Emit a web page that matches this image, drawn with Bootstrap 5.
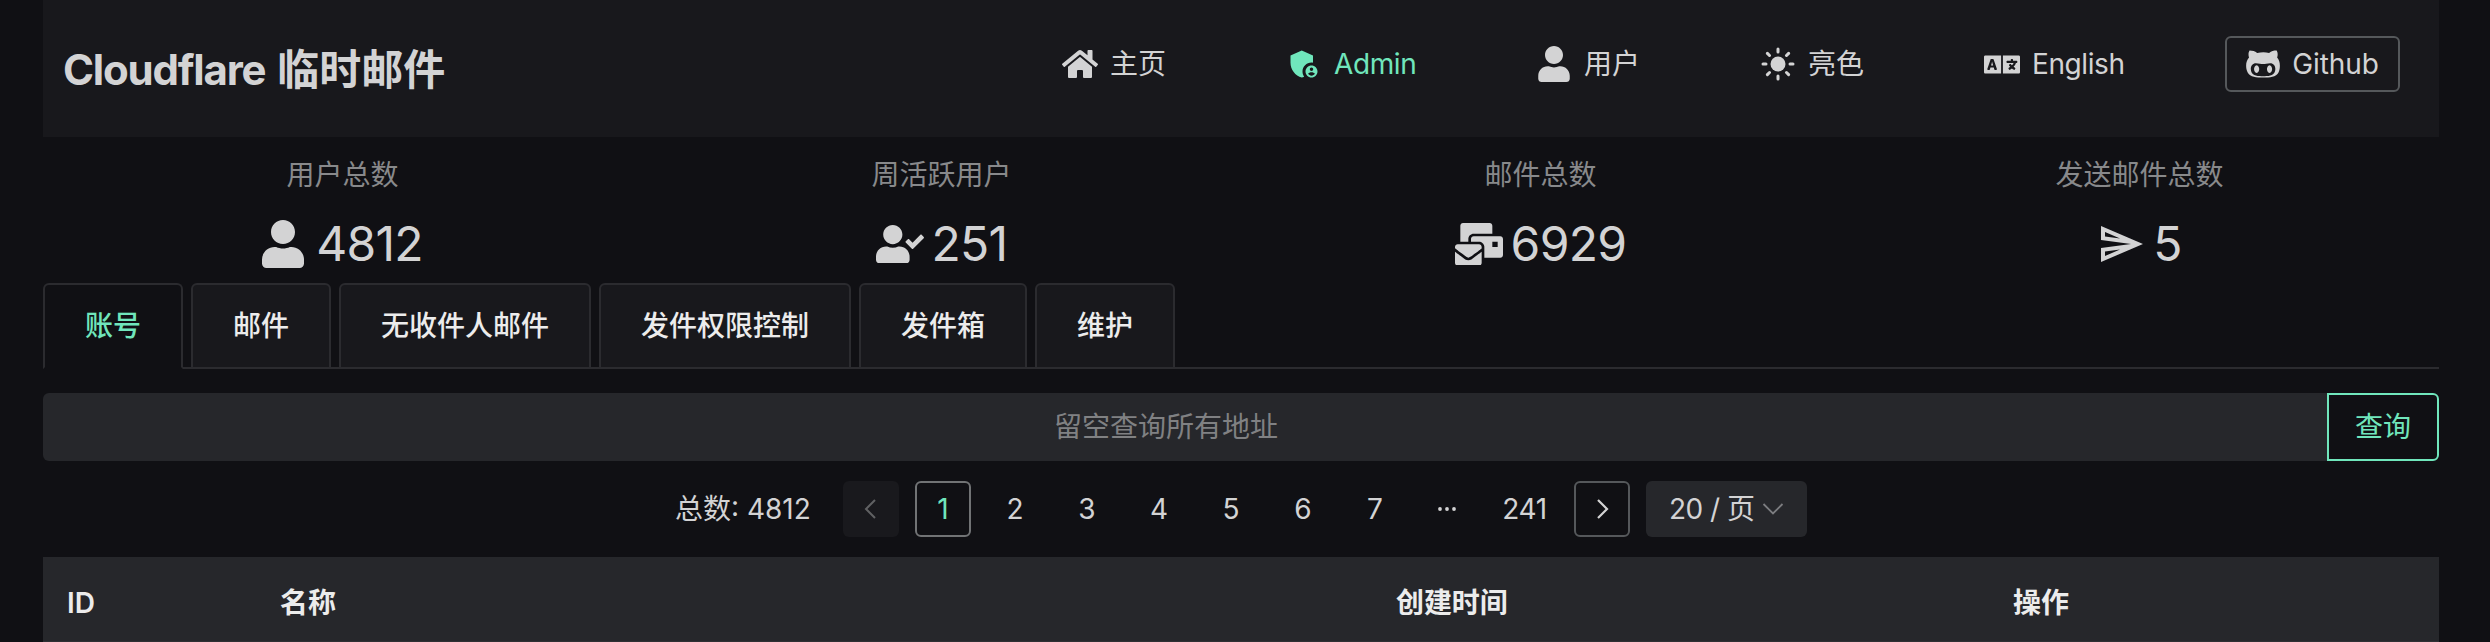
<!DOCTYPE html>
<html lang="zh-CN" data-bs-theme="dark">
<head>
<meta charset="utf-8">
<title>Cloudflare 临时邮件</title>
<link href="https://cdn.jsdelivr.net/npm/bootstrap@5.3.0/dist/css/bootstrap.min.css" rel="stylesheet">
<style>
  :root { --accent: #70e6bc; --fg: #d3d3d4; --line: #2b2b2f; --field: #26272b; }
  body { background: #101014; color: var(--fg); font-family: Inter, "Noto Sans CJK SC", sans-serif; font-size: 28px; line-height: 44px; height: 642px; overflow: hidden; }
  svg { display: block; flex: none; fill: currentColor; }
  .page { padding: 0 51px 0 43px; height: 642px; overflow: hidden; }
  .topbar { height: 137px; background: #18181c; padding: 0 39px 0 20px; }
  .brand { font-size: 42px; font-weight: 700; letter-spacing: -1.2px; line-height: 60px; padding-top: 40px; white-space: pre; }
  .brand span { letter-spacing: 0; margin-left: 3px; }
  .menu { display: grid; grid-template-columns: 224px 250px 224px 224px 241px 175px; padding-top: 36px; height: 92px; }
  .menu .entry { display: flex; align-items: center; gap: 12px; color: inherit; text-decoration: none; white-space: nowrap; }
  .menu .entry > .glyph { width: 36px; display: flex; justify-content: center; }
  .menu .current { color: var(--accent); }
  .menu .btn { --bs-btn-border-color: #55585b; --bs-btn-color: var(--fg); --bs-btn-border-radius: 6px; border-width: 2px; font-size: 28px; line-height: 44px; width: 175px; padding: 0; height: 56px; gap: 12px; }
  .lat { letter-spacing: -.4px; }
  .btn .lat { letter-spacing: -.1px; }
  .stats { height: 146px; padding-top: 16px; }
  .stats .title { color: #88898b; line-height: 44px; }
  .stats .figure { height: 60px; margin: 17px 0 0; font-size: 48px; letter-spacing: -.7px; line-height: 60px; }
  .tabs { --bs-nav-tabs-border-width: 2px; --bs-nav-tabs-border-color: var(--line); --bs-nav-tabs-border-radius: 6px; gap: 8px; height: 86px; flex-wrap: nowrap; }
  .tabs .nav-link { height: 86px; padding: 0 40px; font-weight: 500; color: #ececec; background: #18181c; border-color: var(--line); line-height: 82px; }
  .tabs .nav-link.active { color: var(--accent); background: #101014; border-color: var(--line) var(--line) #101014; }
  .search { height: 68px; margin-top: 24px; }
  .search .form-control { background: var(--field); border: 0; border-radius: 6px 0 0 6px; font-size: 28px; text-align: center; padding: 0 38px 0 0; }
  .search .form-control::placeholder { color: #808183; opacity: 1; }
  .search .btn { width: 112px; border: 2px solid var(--accent); border-radius: 0 6px 6px 0; color: var(--accent); font-size: 28px; margin: 0 !important; padding: 0; }
  .pager { height: 56px; margin: 20px 0; padding-left: 632px; }
  .pager .total { width: 152px; margin-right: 16px; letter-spacing: 0; white-space: nowrap; }
  .pager .cell { width: 56px; height: 56px; border: 2px solid transparent; border-radius: 6px; display: flex; align-items: center; justify-content: center; margin-right: 16px; }
  .pager .cell.wide { width: 67px; margin-right: 16px; letter-spacing: -.3px; }
  .pager .prev { background: #19191d; color: #606163; }
  .pager .on { border-color: #717375; color: var(--accent); }
  .pager .next { border-color: #55585b; }
  .pager .size { width: 161px; height: 56px; background: var(--field); border-radius: 6px; padding-left: 23px; letter-spacing: -.5px; }
  .pager .size svg { margin-left: 7px; }
  .line { fill: none; stroke: currentColor; }
  .listing { table-layout: fixed; margin: 0; --bs-table-bg: #26272b; --bs-table-color: #ececec; }
  .listing th { height: 85px; padding: 7px 24px 0; border-bottom: 2px solid #2f3034; font-weight: 600; vertical-align: middle; line-height: 44px; letter-spacing: -.1px; }
</style>
</head>
<body>
<svg width="0" height="0" class="position-absolute">
  <symbol id="person" viewBox="0 0 448 512"><path d="M224 256c70.7 0 128-57.3 128-128S294.7 0 224 0 96 57.3 96 128s57.3 128 128 128zm89.6 32h-16.7c-22.2 10.2-46.9 16-72.9 16s-50.6-5.8-72.9-16h-16.7C60.2 288 0 348.2 0 422.4V464c0 26.5 21.5 48 48 48h352c26.5 0 48-21.5 48-48v-41.6c0-74.2-60.2-134.4-134.4-134.4z"/></symbol>
</svg>
<div class="page">
  <header class="topbar d-flex justify-content-between align-items-start">
    <div class="brand">Cloudflare <span>临时邮件</span></div>
    <nav class="menu">
      <a class="entry"><span class="glyph"><svg width="36" height="32" viewBox="0 0 576 512"><path d="M280.37 148.26L96 300.11V464a16 16 0 0 0 16 16l112.06-.29a16 16 0 0 0 15.92-16V368a16 16 0 0 1 16-16h64a16 16 0 0 1 16 16v95.64a16 16 0 0 0 16 16.05L464 480a16 16 0 0 0 16-16V300L295.67 148.26a12.19 12.19 0 0 0-15.3 0zM571.6 251.47L488 182.56V44.05a12 12 0 0 0-12-12h-56a12 12 0 0 0-12 12v72.61L318.47 43a48 48 0 0 0-61 0L4.34 251.47a12 12 0 0 0-1.6 16.9l25.5 31A12 12 0 0 0 45.15 301l235.22-193.74a12.19 12.19 0 0 1 15.3 0L530.9 301a12 12 0 0 0 16.9-1.6l25.5-31a12 12 0 0 0-1.7-16.93z"/></svg></span>主页</a>
      <a class="entry current"><span class="glyph"><svg width="36" height="36" viewBox="0 0 24 24"><path d="M17 11c.34 0 .67.04 1 .09V6.27L10.5 3L3 6.27v4.91c0 4.54 3.2 8.79 7.5 9.82c.55-.13 1.08-.32 1.6-.55c-.69-.98-1.1-2.17-1.1-3.45c0-3.31 2.69-6 6-6z"/><path d="M17 13c-2.21 0-4 1.79-4 4s1.79 4 4 4s4-1.79 4-4s-1.79-4-4-4zm0 1.38c.62 0 1.12.51 1.12 1.12s-.51 1.12-1.12 1.12s-1.12-.51-1.12-1.12s.5-1.12 1.12-1.12zm0 5.37c-.93 0-1.74-.46-2.24-1.17c.05-.72 1.51-1.08 2.24-1.08s2.19.36 2.24 1.08c-.5.71-1.31 1.17-2.24 1.17z"/></svg></span><span class="lat">Admin</span></a>
      <a class="entry"><span class="glyph"><svg width="32" height="36"><use href="#person"/></svg></span>用户</a>
      <a class="entry"><span class="glyph"><svg width="36" height="36" viewBox="0 0 36 36"><circle cx="18" cy="18" r="7.5"/><path class="line" stroke-width="3" stroke-linecap="round" d="M18 3v3M18 30v3M3 18h3M30 18h3M7.4 7.4l2.1 2.1M26.5 26.5l2.1 2.1M7.4 28.6l2.1-2.1M26.5 9.5l2.1-2.1"/></svg></span>亮色</a>
      <a class="entry"><span class="glyph"><svg width="36" height="29" viewBox="0 0 640 512"><path d="M152.1 236.2c-3.5-12.1-7.8-33.2-7.8-33.2h-.5s-4.3 21.1-7.8 33.2l-11.1 37.5H163zM616 96H336v320h280c13.3 0 24-10.7 24-24V120c0-13.3-10.7-24-24-24zm-24 120c0 6.6-5.4 12-12 12h-11.4c-6.9 23.6-21.7 47.4-42.7 69.9 8.4 6.4 17.1 12.5 26.1 18 5.5 3.4 7.3 10.5 4.1 16.2l-7.9 13.9c-3.4 5.9-10.9 7.8-16.7 4.3-12.6-7.8-24.5-16.1-35.4-24.9-10.9 8.7-22.7 17.1-35.4 24.9-5.8 3.5-13.3 1.6-16.7-4.3l-7.9-13.9c-3.2-5.6-1.4-12.8 4.2-16.2 9.3-5.7 18-11.7 26.1-18-7.9-8.4-14.9-17-21-25.7-4-5.7-2.2-13.6 3.7-17.1l6.5-3.9 7.3-4.3c5.4-3.2 12.4-1.7 16 3.4 5 7 10.8 14 17.4 20.9 13.5-14.2 23.8-28.9 30-43.2H412c-6.6 0-12-5.4-12-12v-16c0-6.6 5.4-12 12-12h64v-16c0-6.6 5.4-12 12-12h16c6.6 0 12 5.4 12 12v16h64c6.6 0 12 5.4 12 12zM0 120v272c0 13.3 10.7 24 24 24h280V96H24c-13.3 0-24 10.7-24 24zm58.9 216.1L116.4 167c1.7-4.9 6.2-8.1 11.4-8.1h32.5c5.1 0 9.7 3.3 11.4 8.1l57.5 169.1c2.6 7.8-3.1 15.9-11.4 15.9h-22.9a12 12 0 0 1-11.5-8.6l-9.4-31.9h-60.2l-9.1 31.8c-1.5 5.1-6.2 8.7-11.5 8.7H70.3c-8.2 0-14-8.1-11.4-15.9z"/></svg></span><span class="lat">English</span></a>
      <button class="btn d-flex align-items-center justify-content-center"><svg width="34" height="36" viewBox="0 0 480 512"><path d="M186.1 328.7c0 20.9-10.9 55.1-36.7 55.1s-36.7-34.2-36.7-55.1 10.9-55.1 36.7-55.1 36.7 34.2 36.7 55.1zM480 278.2c0 31.9-3.2 65.7-17.5 95-37.9 76.6-142.1 74.8-216.7 74.8-75.8 0-186.2 2.7-225.6-74.8-14.6-29-20.2-63.1-20.2-95 0-41.9 13.9-81.5 41.5-113.6-5.2-15.8-7.7-32.4-7.7-48.8 0-21.5 4.9-32.3 14.6-51.8 45.3 0 74.3 9 108.8 36 29-6.9 58.8-10 88.7-10 27 0 54.2 2.9 80.4 9.2 34-26.7 63-35.2 107.8-35.2 9.8 19.5 14.6 30.3 14.6 51.8 0 16.4-2.6 32.7-7.7 48.2 27.5 32.4 39 72.3 39 114.2zm-64.3 50.5c0-43.9-26.7-82.6-73.5-82.6-18.9 0-37 3.4-56 6-14.9 2.3-29.8 3.2-45.1 3.2-15.2 0-30.1-.9-45.1-3.2-18.7-2.6-37-6-56-6-46.8 0-73.5 38.7-73.5 82.6 0 87.8 80.4 101.3 150.4 101.3h48.2c70.3 0 150.6-13.4 150.6-101.3zm-82.6-55.1c-25.8 0-36.7 34.2-36.7 55.1s10.9 55.1 36.7 55.1 36.7-34.2 36.7-55.1-10.9-55.1-36.7-55.1z"/></svg><span class="lat">Github</span></button>
    </nav>
  </header>

  <section class="stats row g-0 text-center">
    <div class="col-3"><div class="title">用户总数</div>
      <div class="figure d-flex justify-content-center align-items-center"><svg class="me-2" width="42" height="48"><use href="#person"/></svg><span class="ps-1">4812</span></div></div>
    <div class="col-3"><div class="title">周活跃用户</div>
      <div class="figure d-flex justify-content-center align-items-center"><svg class="me-2" width="48" height="38.4" viewBox="0 0 640 512"><path d="M224 256c70.7 0 128-57.3 128-128S294.7 0 224 0 96 57.3 96 128s57.3 128 128 128zm89.6 32h-16.7c-22.2 10.2-46.9 16-72.9 16s-50.6-5.8-72.9-16h-16.7C60.2 288 0 348.2 0 422.4V464c0 26.5 21.5 48 48 48h352c26.5 0 48-21.5 48-48v-41.6c0-74.2-60.2-134.4-134.4-134.4zm323-128.4l-27.8-28.1c-4.6-4.7-12.1-4.7-16.8-.1l-104.8 104-45.5-45.8c-4.6-4.7-12.1-4.7-16.8-.1l-28.1 27.9c-4.7 4.6-4.7 12.1-.1 16.8l81.7 82.3c4.6 4.7 12.1 4.7 16.8.1l141.3-140.2c4.6-4.7 4.7-12.2.1-16.8z"/></svg><span>251</span></div></div>
    <div class="col-3"><div class="title">邮件总数</div>
      <div class="figure d-flex justify-content-center align-items-center"><svg class="me-2" width="48" height="42.7" viewBox="0 0 576 512"><path d="M160 448c-25.6 0-51.2-22.4-64-32-64-44.8-83.2-60.8-96-70.4V480c0 17.67 14.33 32 32 32h256c17.67 0 32-14.33 32-32V345.6c-12.8 9.6-32 25.6-96 70.4-12.8 9.6-38.4 32-64 32zm128-192H32c-17.67 0-32 14.33-32 32v16c25.6 19.2 22.4 19.2 115.2 86.4 9.6 6.4 28.8 25.6 44.8 25.6s35.2-19.2 44.8-22.4c92.8-67.2 89.6-67.2 115.2-86.4V288c0-17.67-14.33-32-32-32zm256-96H224c-17.67 0-32 14.33-32 32v32h96c33.21 0 60.59 25.42 63.71 57.82l.29-.22V416h192c17.67 0 32-14.33 32-32V192c0-17.67-14.33-32-32-32zm-32 128h-64v-64h64v64zm-352-96c0-35.29 28.71-64 64-64h224V32c0-17.67-14.33-32-32-32H96C78.33 0 64 14.33 64 32v192h96v-32z"/></svg><span>6929</span></div></div>
    <div class="col-3"><div class="title">发送邮件总数</div>
      <div class="figure d-flex justify-content-center align-items-center"><svg class="me-2" width="48" height="48" viewBox="0 0 24 24"><path d="M4.01 6.03l7.51 3.22l-7.52-1l.01-2.22m7.5 8.72L4 17.97v-2.22l7.51-1M2.01 3L2 10l15 2l-15 2l.01 7L23 12L2.01 3z"/></svg><span>5</span></div></div>
  </section>

  <ul class="nav nav-tabs tabs">
    <li class="nav-item"><a class="nav-link active">账号</a></li>
    <li class="nav-item"><a class="nav-link">邮件</a></li>
    <li class="nav-item"><a class="nav-link">无收件人邮件</a></li>
    <li class="nav-item"><a class="nav-link">发件权限控制</a></li>
    <li class="nav-item"><a class="nav-link">发件箱</a></li>
    <li class="nav-item"><a class="nav-link">维护</a></li>
  </ul>

  <div class="input-group search">
    <input class="form-control" type="text" placeholder="留空查询所有地址">
    <button class="btn">查询</button>
  </div>

  <div class="pager d-flex align-items-center">
    <span class="total">总数: 4812</span>
    <span class="cell prev"><svg class="line" width="14" height="20" viewBox="0 0 14 20" stroke-width="2"><path d="M11 1L2 10l9 9"/></svg></span>
    <span class="cell on">1</span><span class="cell">2</span><span class="cell">3</span><span class="cell">4</span><span class="cell">5</span><span class="cell">6</span><span class="cell">7</span>
    <span class="cell"><svg width="20" height="6" viewBox="0 0 20 6"><circle cx="3" cy="3" r="1.9"/><circle cx="10" cy="3" r="1.9"/><circle cx="17" cy="3" r="1.9"/></svg></span>
    <span class="cell wide">241</span>
    <span class="cell next"><svg class="line" width="14" height="20" viewBox="0 0 14 20" stroke-width="2.2"><path d="M3 1l9 9-9 9"/></svg></span>
    <span class="size d-flex align-items-center">20 / 页<svg class="line" style="color:#7c7d80" width="22" height="14" viewBox="0 0 22 14" stroke-width="1.8"><path d="M1.5 2L11 11.5 20.5 2"/></svg></span>
  </div>

  <table class="table listing">
    <colgroup><col style="width:213px"><col style="width:1116px"><col style="width:617px"><col></colgroup>
    <thead><tr><th>ID</th><th>名称</th><th>创建时间</th><th>操作</th></tr></thead>
  </table>
</div>
<script src="https://cdn.jsdelivr.net/npm/bootstrap@5.3.0/dist/js/bootstrap.bundle.min.js"></script>
</body>
</html>
